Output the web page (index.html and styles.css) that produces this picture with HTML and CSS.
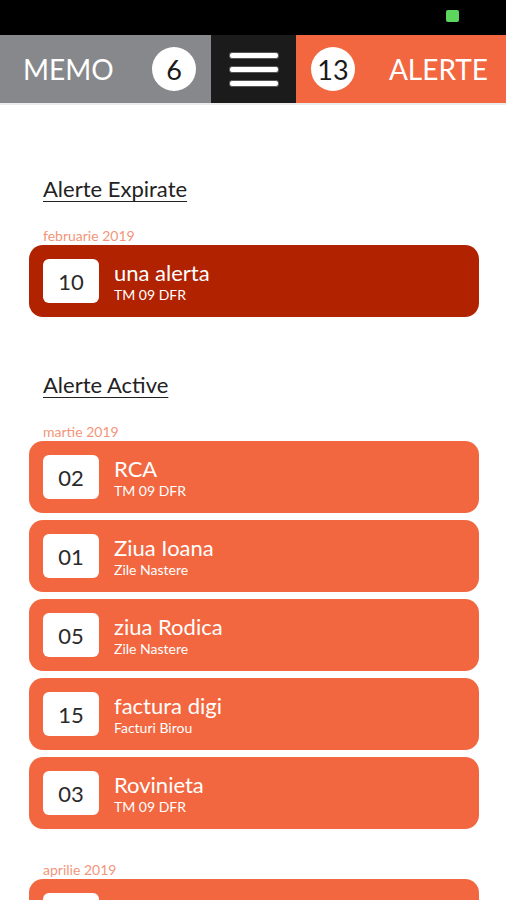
FILE: index.html
```html
<!DOCTYPE html>
<html>
<head>
<meta charset="utf-8">
<link rel="stylesheet" href="styles.css">
</head>
<body>
<div class="status"><span class="dot"></span></div>
<div class="nav">
  <div class="memo"><span class="label">MEMO</span><span class="count">6</span></div>
  <div class="menu">
    <span class="bar"></span><span class="bar"></span><span class="bar"></span>
  </div>
  <div class="alerte"><span class="count">13</span><span class="label">ALERTE</span></div>
</div>
<div class="content">
  <h2 class="section first">Alerte Expirate</h2>
  <div class="month">februarie 2019</div>
  <div class="card expired"><div class="day">10</div><div class="info"><div class="title">una alerta</div><div class="sub">TM 09 DFR</div></div></div>

  <h2 class="section">Alerte Active</h2>
  <div class="month">martie 2019</div>
  <div class="card"><div class="day">02</div><div class="info"><div class="title">RCA</div><div class="sub">TM 09 DFR</div></div></div>
  <div class="card"><div class="day">01</div><div class="info"><div class="title">Ziua Ioana</div><div class="sub">Zile Nastere</div></div></div>
  <div class="card"><div class="day">05</div><div class="info"><div class="title">ziua Rodica</div><div class="sub">Zile Nastere</div></div></div>
  <div class="card"><div class="day">15</div><div class="info"><div class="title">factura digi</div><div class="sub">Facturi Birou</div></div></div>
  <div class="card"><div class="day">03</div><div class="info"><div class="title">Rovinieta</div><div class="sub">TM 09 DFR</div></div></div>

  <div class="month later">aprilie 2019</div>
  <div class="card"><div class="day">08</div><div class="info"><div class="title">ITP</div><div class="sub">TM 09 DFR</div></div></div>
</div>
</body>
</html>
```

FILE: styles.css
```css
html, body {
  margin: 0;
  padding: 0;
  background: #fff;
  font-family: Lato, "Open Sans", sans-serif;
  overflow: hidden;
  height: 900px;
}
.status {
  height: 35px;
  background: #000;
  display: flex;
  justify-content: flex-end;
  align-items: flex-start;
  padding-right: 47px;
  box-sizing: border-box;
}
.dot {
  width: 13px;
  height: 12px;
  margin-top: 10px;
  background: #5cd65c;
  border-radius: 2px;
}
.nav {
  display: flex;
  height: 68px;
  border-bottom: 2px solid #ececec;
}
.memo {
  width: 211px;
  background: #87888b;
  display: flex;
  align-items: center;
  padding-left: 23px;
  box-sizing: border-box;
}
.memo .label {
  color: #fff;
  font-size: 28px;
  width: 129px;
}
.count {
  width: 44px;
  height: 44px;
  border-radius: 50%;
  background: #fff;
  color: #1a1a1a;
  font-size: 27px;
  display: flex;
  align-items: center;
  justify-content: center;
}
.menu {
  width: 85px;
  background: #1b1b1b;
  display: flex;
  flex-direction: column;
  justify-content: center;
  align-items: center;
  gap: 7px;
}
.bar {
  width: 48px;
  height: 5px;
  background: #fff;
  border: 1px solid #555;
  border-radius: 3px;
}
.alerte {
  flex: 1;
  background: #f26740;
  display: flex;
  align-items: center;
  padding-left: 15px;
  padding-right: 18px;
  justify-content: space-between;
}
.alerte .label {
  color: #fff;
  font-size: 28px;
}
.content {
  padding: 0 27px 0 29px;
}
.section {
  margin: 56px 0 0 14px;
  font-size: 22px;
  font-weight: 400;
  color: #222;
  text-decoration: underline;
  text-decoration-thickness: 1px;
  text-underline-offset: 4px;
  line-height: 24px;
}
.section.first {
  margin-top: 72px;
}
.month {
  margin: 26px 0 0 14px;
  font-size: 14px;
  color: #f39579;
  line-height: 17px;
  height: 18px;
}
.month.later {
  margin-top: 32px;
}
.card {
  height: 72px;
  background: #f26740;
  border-radius: 14px;
  display: flex;
  align-items: center;
  padding-left: 14px;
  box-sizing: border-box;
  margin-bottom: 7px;
}
.card.expired {
  background: #b02200;
}
.day {
  width: 56px;
  height: 44px;
  background: #fff;
  border-radius: 6px;
  display: flex;
  align-items: center;
  justify-content: center;
  font-size: 22px;
  color: #2a2a2a;
}
.info {
  margin-left: 15px;
  color: #fff;
}
.title {
  font-size: 22px;
  line-height: 26px;
}
.sub {
  font-size: 14px;
  line-height: 17px;
}
```
